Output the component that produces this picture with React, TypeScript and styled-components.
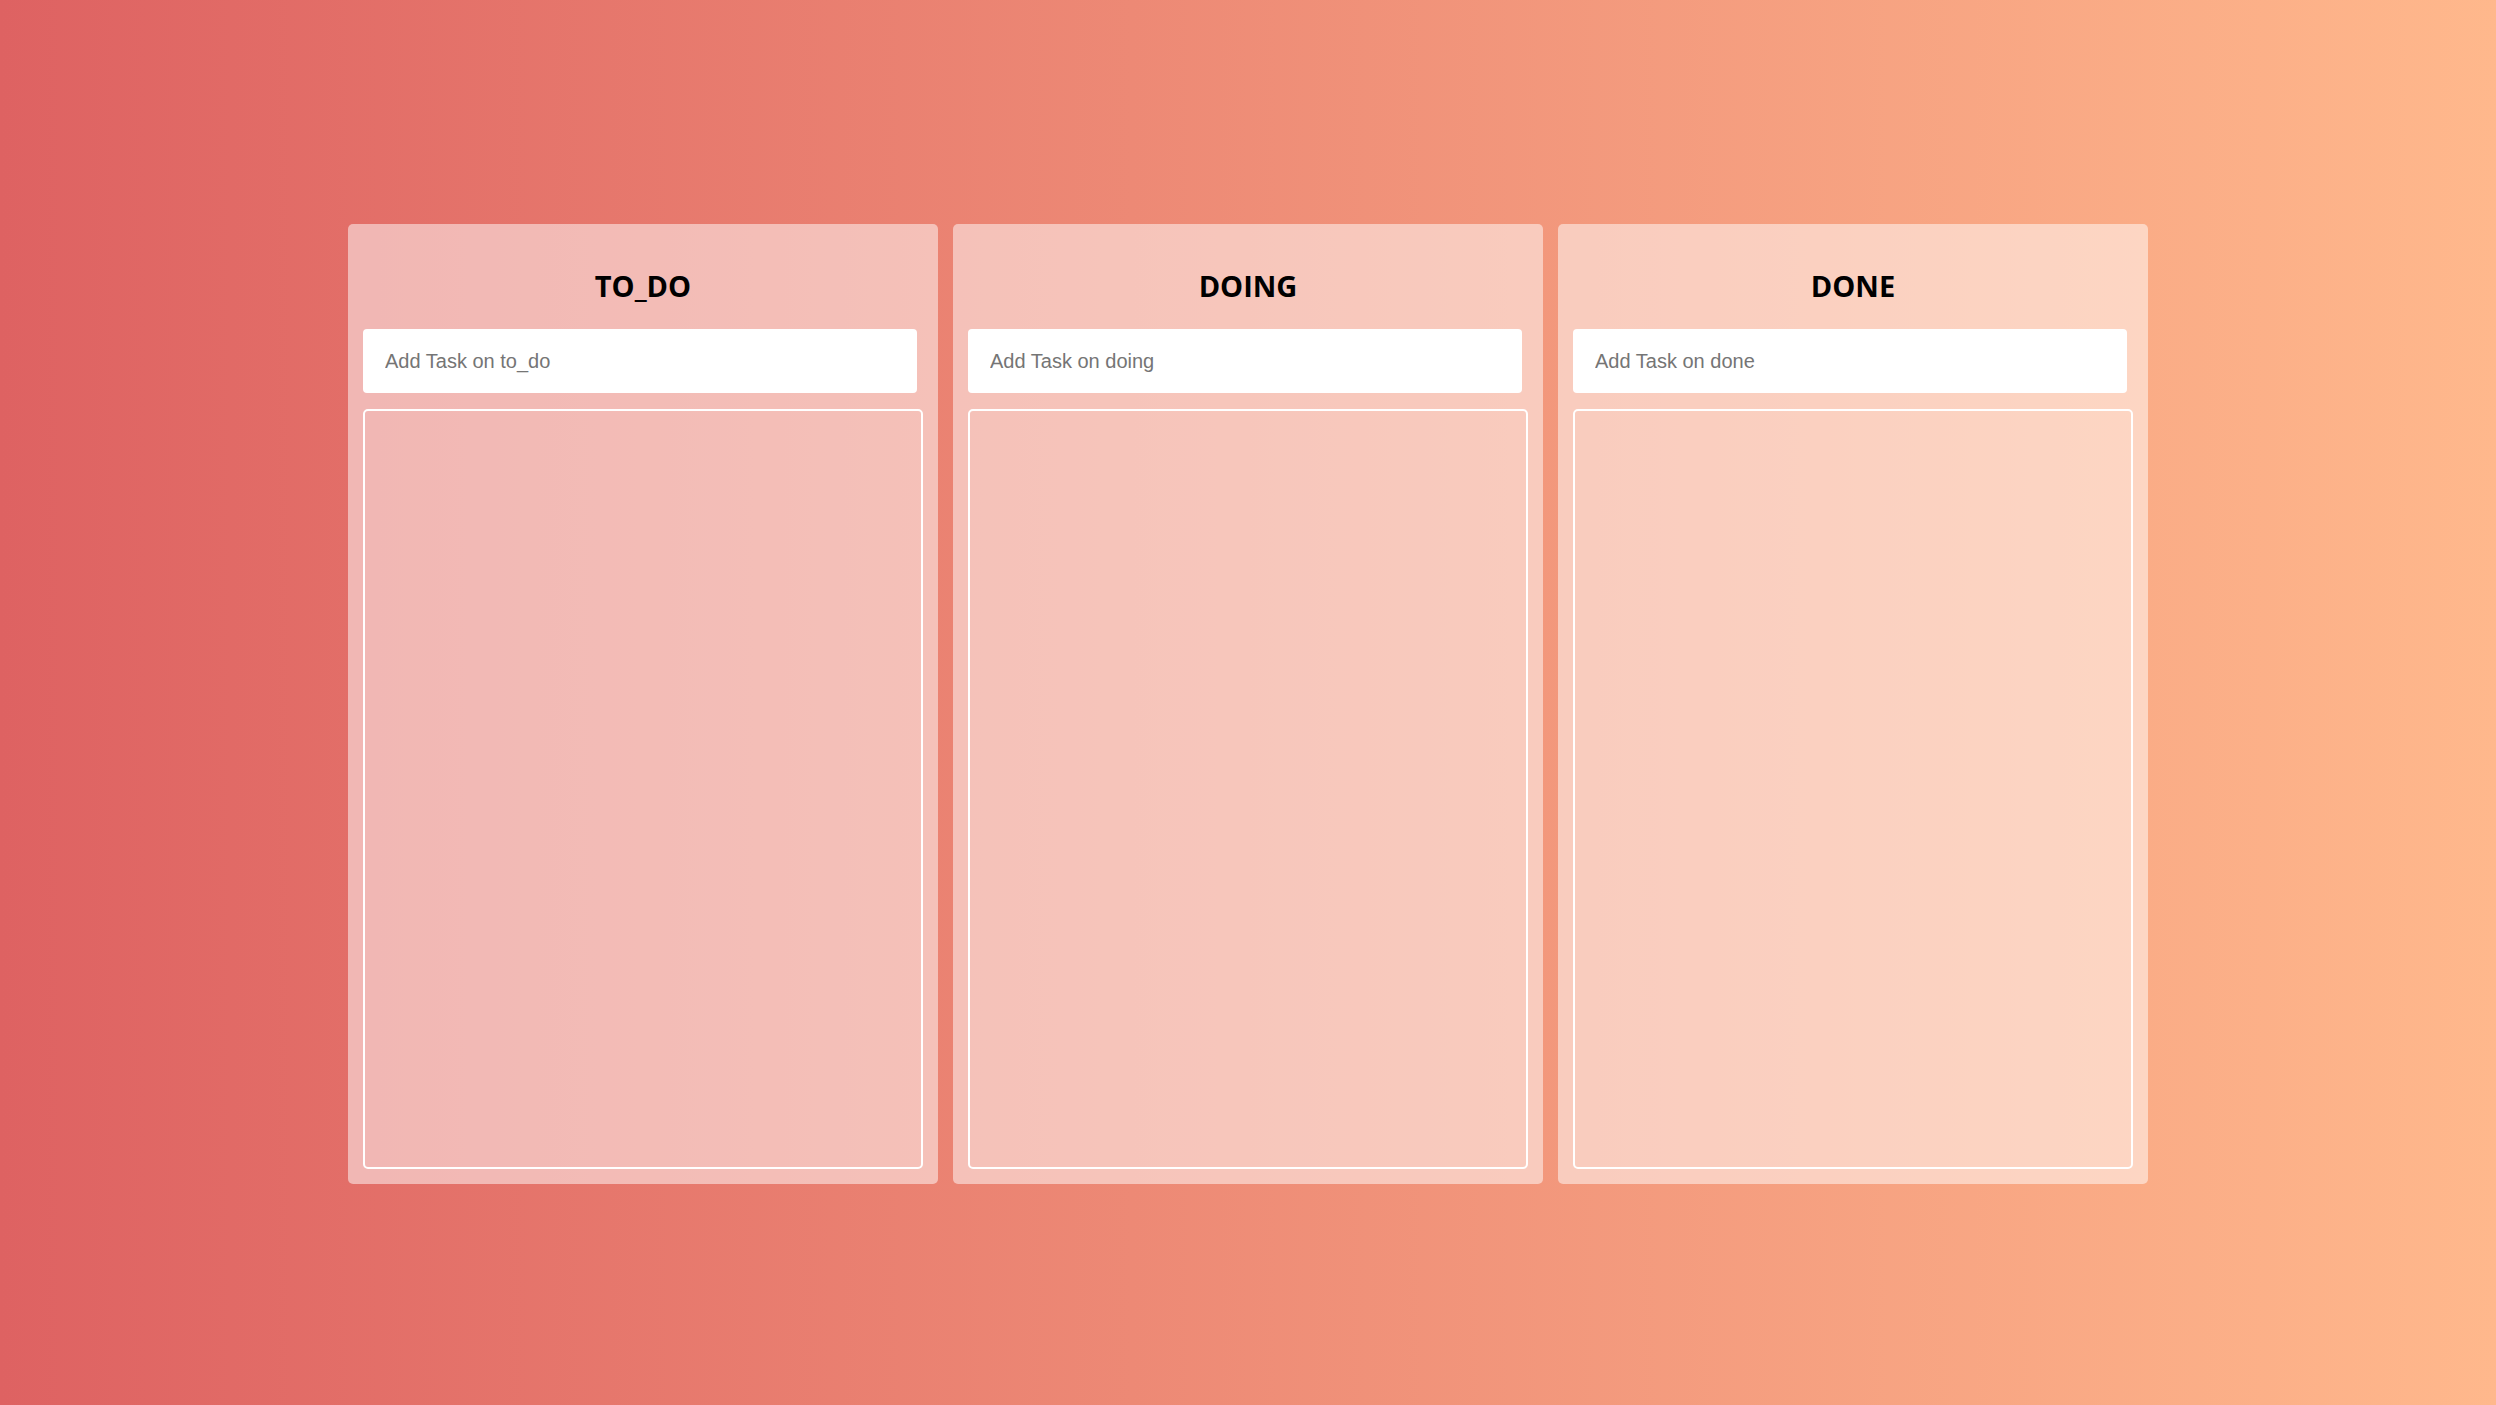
import React from "react";
import styled, { createGlobalStyle } from "styled-components";

const GlobalStyle = createGlobalStyle`
  * { box-sizing: border-box; }
  html, body { margin: 0; padding: 0; }
  body {
    min-height: 100vh;
    background: linear-gradient(to right, #de6262, #ffb88c);
    font-family: "Liberation Sans", Arial, sans-serif;
  }
`;

const Page = styled.main`
  min-height: 100vh;
  display: flex;
  justify-content: center;
  align-items: center;
  padding-top: 3px;
`;

const Boards = styled.div`
  display: grid;
  grid-template-columns: repeat(3, 590px);
  gap: 15px;
`;

const Board = styled.section`
  height: 960px;
  padding: 15px;
  border-radius: 5px;
  background: rgba(255, 255, 255, 0.5);
  display: flex;
  flex-direction: column;
`;

const Title = styled.h2`
  margin: 0;
  height: 90px;
  padding-top: 2px;
  display: flex;
  align-items: center;
  justify-content: center;
  font-family: "Open Sans", sans-serif;
  font-weight: 700;
  font-size: 29px;
  color: #000;
`;

const Form = styled.form`
  margin: 0;
`;

const Input = styled.input`
  display: block;
  width: 554px;
  height: 64px;
  border: none;
  border-radius: 4px;
  background: #fff;
  padding: 0 22px;
  font-family: "Liberation Sans", Arial, sans-serif;
  font-size: 20px;
  color: #222;
  outline: none;
  &::placeholder {
    color: #757575;
  }
`;

const Area = styled.div`
  margin-top: 16px;
  flex: 1;
  border: 2px solid #fff;
  border-radius: 5px;
`;

const boards = [
  { id: "to_do", title: "TO_DO" },
  { id: "doing", title: "DOING" },
  { id: "done", title: "DONE" },
];

export default function App() {
  return (
    <>
      <GlobalStyle />
      <Page>
        <Boards>
          {boards.map((b) => (
            <Board key={b.id}>
              <Title>{b.title}</Title>
              <Form onSubmit={(e) => e.preventDefault()}>
                <Input type="text" placeholder={`Add Task on ${b.id}`} />
              </Form>
              <Area />
            </Board>
          ))}
        </Boards>
      </Page>
    </>
  );
}
